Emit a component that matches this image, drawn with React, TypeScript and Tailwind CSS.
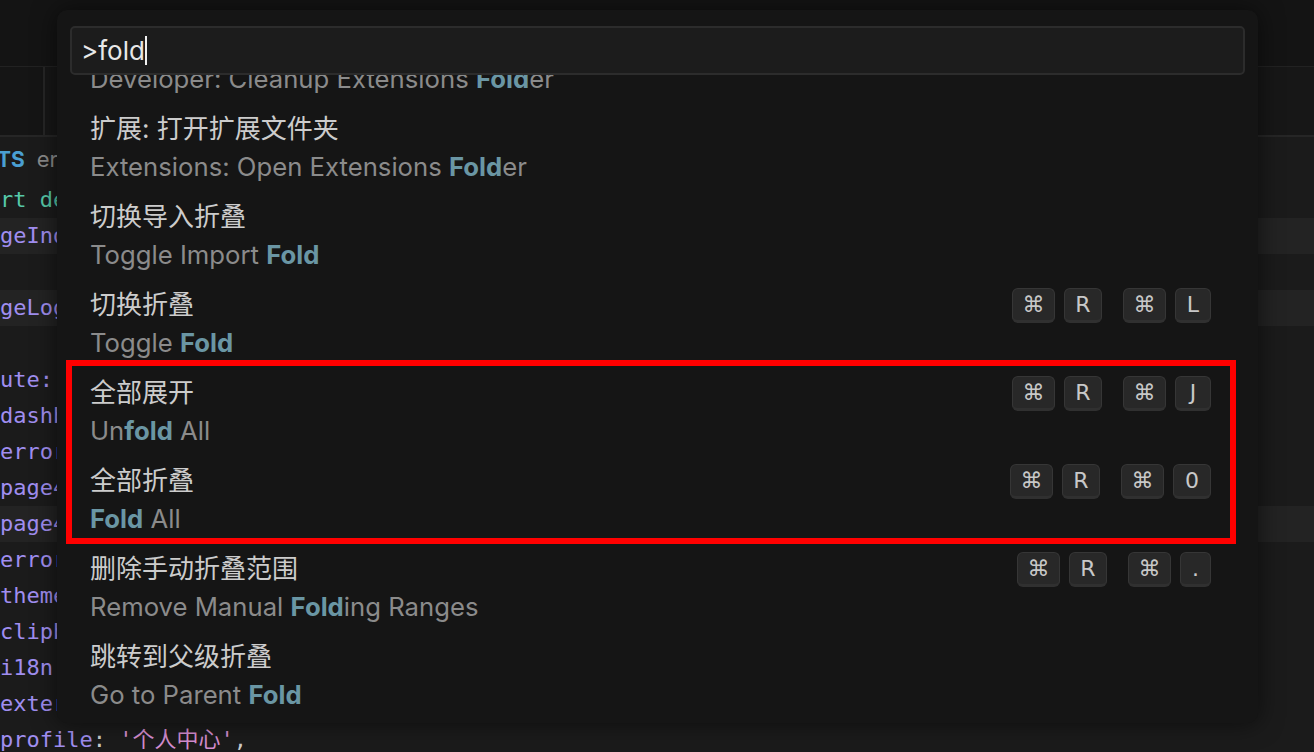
import React from "react";

const ui = "font-['Inter','Noto_Sans_CJK_SC','DejaVu_Sans',sans-serif]";
const mono = "font-['DejaVu_Sans_Mono','Noto_Sans_CJK_SC',monospace]";

type Row = { label: string; detail: string; keys?: string[][] };

const rows: Row[] = [
  { label: "开发人员: 清理扩展文件夹", detail: "Developer: Cleanup Extensions |Fold|er" },
  { label: "扩展: 打开扩展文件夹", detail: "Extensions: Open Extensions |Fold|er" },
  { label: "切换导入折叠", detail: "Toggle Import |Fold|" },
  { label: "切换折叠", detail: "Toggle |Fold|", keys: [["⌘", "R"], ["⌘", "L"]] },
  { label: "全部展开", detail: "Un|fold| All", keys: [["⌘", "R"], ["⌘", "J"]] },
  { label: "全部折叠", detail: "|Fold| All", keys: [["⌘", "R"], ["⌘", "0"]] },
  { label: "删除手动折叠范围", detail: "Remove Manual |Fold|ing Ranges", keys: [["⌘", "R"], ["⌘", "."]] },
  { label: "跳转到父级折叠", detail: "Go to Parent |Fold|" },
];

const keyWidth: Record<string, string> = {
  "⌘": "w-[43px]",
  R: "w-[38px]",
  L: "w-[36px]",
  J: "w-[36px]",
  "0": "w-[38px]",
  ".": "w-[31px]",
};

// code lines behind the palette: [text, colour, highlighted band]
const code: [string, string, boolean][] = [
  ["export default {", "text-[#56c8a8]", false],
  ["  pageIndex: '首页',", "text-[#a08ef0]", true],
  ["", "", false],
  ["  pageLogin: '登录',", "text-[#a08ef0]", true],
  ["", "", false],
  ["  route: {", "text-[#a08ef0]", false],
  ["    dashboard: '首页',", "text-[#a08ef0]", false],
  ["    errorPages: '错误页面',", "text-[#a08ef0]", false],
  ["    page401: '401',", "text-[#a08ef0]", false],
  ["    page404: '404',", "text-[#a08ef0]", true],
  ["    errorLog: '错误日志',", "text-[#a08ef0]", false],
  ["    theme: '换肤',", "text-[#a08ef0]", false],
  ["    clipboardDemo: 'Clipboard',", "text-[#a08ef0]", false],
  ["    i18n: '国际化',", "text-[#a08ef0]", false],
  ["    externalLink: '外链',", "text-[#a08ef0]", false],
];

function Detail({ text }: { text: string }) {
  return (
    <div className="leading-[38px] text-[25.7px] text-[#8b8b8b] whitespace-nowrap">
      {text.split("|").map((part, i) =>
        i % 2 === 1 ? (
          <span key={i} className="font-bold text-[#6a96a4]">
            {part}
          </span>
        ) : (
          <span key={i}>{part}</span>
        )
      )}
    </div>
  );
}

function Keys({ chords }: { chords: string[][] }) {
  return (
    <div className="flex items-center gap-[21px]">
      {chords.map((chord, i) => (
        <div key={i} className="flex items-center gap-[9px]">
          {chord.map((k, j) => (
            <span
              key={j}
              className={`${keyWidth[k]} h-[35px] flex items-center justify-center rounded-[6px] border border-[#363636] border-b-[3px] border-b-[#303030] bg-[#282828] text-[22px] text-[#c8c8c8] font-['DejaVu_Sans','Inter',sans-serif]`}
            >
              {k}
            </span>
          ))}
        </div>
      ))}
    </div>
  );
}

export default function App() {
  return (
    <div className={`relative w-[1314px] h-[752px] overflow-hidden bg-[#1b1b1b] ${ui}`}>
      {/* editor behind */}
      <div className="h-[67px] bg-[#141414] border-b border-[#222222]" />
      <div className="h-[70px] bg-[#171717] border-b-2 border-[#262626] flex">
        <div className="w-[45px] h-full bg-[#151515] border-r-2 border-[#262626]" />
      </div>
      <div className="h-[45px] flex items-center gap-[12px] -ml-[3px] text-[22px]">
        <span className="font-bold text-[#4a9fd2] text-[21px]">TS</span>
        <span className="text-[#8a8a8a]">errorLog.ts</span>
      </div>
      <div className={`${mono} text-[22px]`}>
        {code.map(([text, color, band], i) => (
          <div key={i} className={`h-[36px] leading-[36px] whitespace-pre ${band ? "bg-[#232323]" : ""}`}>
            <span className={`-ml-[53px] inline-block ${color}`}>{text}</span>
          </div>
        ))}
        <div className="h-[36px] leading-[36px] whitespace-pre">
          <span className="-ml-[53px] inline-block">
            <span className="text-[#a08ef0]">    profile</span>
            <span className="text-[#cccccc]">: </span>
            <span className="text-[#d68fd2]">'个人中心'</span>
            <span className="text-[#cccccc]">,</span>
          </span>
        </div>
      </div>

      {/* command palette */}
      <div className="absolute left-[57px] top-[10px] w-[1201px] h-[713px] rounded-[10px] bg-[#151515] shadow-[0_0_24px_rgba(0,0,0,0.55)] flex flex-col px-[13px] pt-[16px] overflow-hidden">
        <div className="h-[49px] shrink-0 flex items-center px-[9px] rounded-[5px] border-2 border-[#2c2c2c] bg-[#1c1c1c] text-[26px] text-[#e8e8e8]">
          <span>&gt;fold</span>
          <span className="w-[2px] h-[29px] bg-[#f0f0f0]" />
        </div>
        <div className="flex-1 overflow-hidden">
          <div className="-mt-[61px] text-[26px]">
            {rows.map((r, i) => (
              <div key={i} className="h-[88px] pt-[8px] pl-[20px] pr-[34px]">
                <div className="flex items-center justify-between h-[38px]">
                  <span className="text-[#cccccc] leading-[38px] whitespace-nowrap">{r.label}</span>
                  {r.keys && <Keys chords={r.keys} />}
                </div>
                <Detail text={r.detail} />
              </div>
            ))}
          </div>
        </div>
      </div>

      {/* red annotation */}
      <div className="absolute left-[66px] top-[360px] w-[1170px] h-[184px] border-[6px] border-[#ff0000]" />
    </div>
  );
}
